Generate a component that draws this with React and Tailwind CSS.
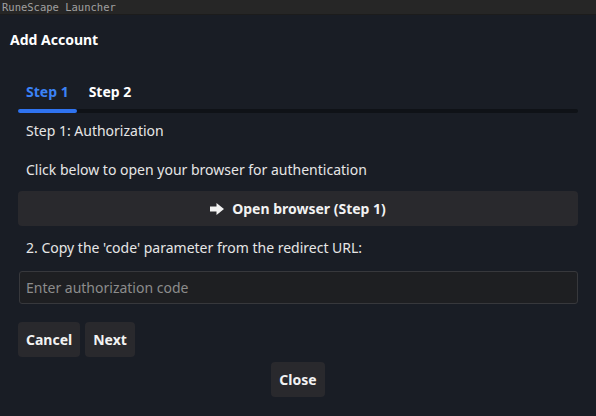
import React from "react";

// Add Account dialog of a launcher, step 1 of the auth flow

const ArrowIcon = () => (
  <svg width="14" height="12" viewBox="0 0 14 12" className="mr-2" aria-hidden="true">
    <path d="M0 3.5h6.5V0L14 6l-7.5 6V8.5H0z" fill="#f2f2f2" />
  </svg>
);

const App = () => {
  return (
    <div className="w-[596px] h-[416px] bg-[#191d25] flex flex-col text-[#e6e6e6] overflow-hidden" style={{ fontFamily: '"Noto Sans", "Open Sans", sans-serif' }}>
      {/* title bar */}
      <div className="h-[15px] bg-[#262626] flex items-center px-[2px] text-[10.5px] leading-none text-[#a0a0a0] border-b border-[#1c1c1c]" style={{ fontFamily: '"DejaVu Sans Mono", monospace' }}>
        RuneScape Launcher
      </div>

      <div className="px-[10px] pt-[16px] text-[14px] font-bold text-white leading-[18px]">Add Account</div>

      <div className="px-[18px] pt-[34px]">
        {/* tabs */}
        <div className="flex flex-col">
          <div className="flex text-[14px] font-bold leading-[18px]">
            <div className="px-[8px] text-[#3b82f6]">Step 1</div>
            <div className="px-[12px] text-white">Step 2</div>
          </div>
          <div className="mt-[8px] h-[4px] bg-[#0f1217] rounded-[2px]">
            <div className="w-[59px] h-[4px] bg-[#2f73f0] rounded-[2px]" />
          </div>
        </div>

        <div className="pt-[8px] text-[14px] leading-[20px] pl-[8px]">Step 1: Authorization</div>
        <div className="pt-[19px] text-[14px] leading-[20px] pl-[8px]">Click below to open your browser for authentication</div>

        <button className="mt-[11px] w-full h-[35px] bg-[#29292d] rounded-[4px] flex items-center justify-center text-[14px] font-bold text-[#f2f2f2]">
          <ArrowIcon />
          Open browser (Step 1)
        </button>

        <div className="pt-[12px] text-[14px] leading-[20px] pl-[8px]">2. Copy the 'code' parameter from the redirect URL:</div>

        <input
          className="mt-[13px] ml-[1px] w-[559px] h-[33px] bg-[#1e1f22] border border-[#37383c] rounded-[3px] px-[6px] text-[14px] text-white placeholder:text-[#8c8c8c] outline-none"
          placeholder="Enter authorization code"
        />

        <div className="mt-[18px] flex gap-[5px]">
          <button className="h-[35px] px-[8px] bg-[#29292d] rounded-[4px] text-[14px] font-bold text-[#f2f2f2]">Cancel</button>
          <button className="h-[35px] px-[8px] bg-[#29292d] rounded-[4px] text-[14px] font-bold text-[#f2f2f2]">Next</button>
        </div>
      </div>

      <div className="flex justify-center mt-[5px]">
        <button className="h-[35px] px-[8px] bg-[#29292d] rounded-[4px] text-[14px] font-bold text-[#f2f2f2]">Close</button>
      </div>
    </div>
  );
};

export default App;
